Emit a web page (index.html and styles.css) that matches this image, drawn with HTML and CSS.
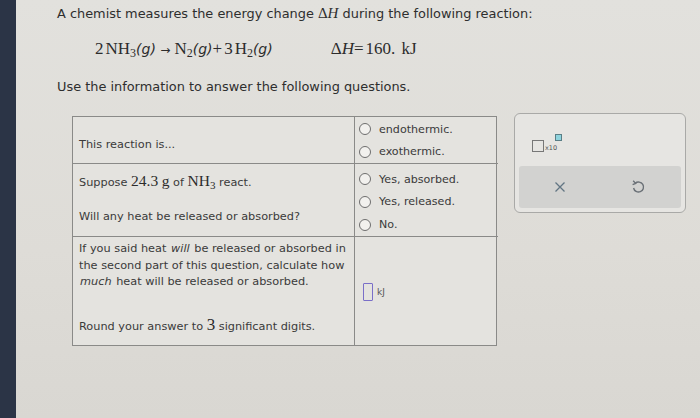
FILE: index.html
```html
<!DOCTYPE html>
<html>
<head>
<meta charset="utf-8">
<link rel="stylesheet" href="styles.css">
</head>
<body>
<div class="screen">
  <div class="strip"></div>
  <div class="page">
    <p class="intro">A chemist measures the energy change <span class="math">Δ<i>H</i></span> during the following reaction:</p>
    <div class="equation">
      <span class="eq">2<span class="thin"></span>NH<sub>3</sub><span class="ph">(g)</span> <span class="arrow">→</span> N<sub>2</sub><span class="ph">(g)</span>+<span class="thin"></span>3<span class="thin"></span>H<sub>2</sub><span class="ph">(g)</span></span>
      <span class="eq dh">Δ<i>H</i>=<span class="thin"></span>160.<span class="thin"></span> kJ</span>
    </div>
    <p class="use">Use the information to answer the following questions.</p>
    <div class="work">
      <div class="qtable">
        <div class="cell left r1"><span>This reaction is...</span></div>
        <div class="cell right r1">
          <label class="opt"><span class="radio"></span>endothermic.</label>
          <label class="opt"><span class="radio"></span>exothermic.</label>
        </div>
        <div class="cell left r2">
          <span>Suppose <span class="num">24.3</span> <span class="num">g</span> of <span class="num">NH<sub>3</sub></span> react.</span>
          <span>Will any heat be released or absorbed?</span>
        </div>
        <div class="cell right r2">
          <label class="opt"><span class="radio"></span>Yes, absorbed.</label>
          <label class="opt"><span class="radio"></span>Yes, released.</label>
          <label class="opt"><span class="radio"></span>No.</label>
        </div>
        <div class="cell left r3">
          <span>If you said heat <em>will</em> be released or absorbed in the second part of this question, calculate how <em>much</em> heat will be released or absorbed.</span>
          <span>Round your answer to <span class="num big">3</span> significant digits.</span>
        </div>
        <div class="cell right r3">
          <div class="answer"><span class="inbox"></span><span class="unit">kJ</span></div>
        </div>
      </div>
      <div class="panel">
        <div class="sci">
          <span class="sq"></span><span class="x10">x10</span><span class="sup"></span>
        </div>
        <div class="tools">
          <svg width="14" height="14" viewBox="0 0 14 14"><path d="M2.5 2.5 L11.5 11.5 M11.5 2.5 L2.5 11.5" stroke="#627583" stroke-width="1.3" fill="none"/></svg>
          <svg width="16" height="16" viewBox="0 0 16 16"><path d="M5.2 4.3 A5 5 0 1 1 3.6 9" stroke="#6a7076" stroke-width="1.4" fill="none"/><path d="M3.2 1.8 L5.6 4.4 L2.6 5.6" stroke="#6a7076" stroke-width="1.4" fill="none"/></svg>
        </div>
      </div>
    </div>
  </div>
</div>
</body>
</html>
```
FILE: styles.css
```css
html, body {
  margin: 0;
  padding: 0;
}
body {
  width: 700px;
  height: 418px;
  overflow: hidden;
  background: #dcdad5;
  font-family: "DejaVu Sans", Verdana, sans-serif;
  color: #333;
}
.screen {
  display: flex;
  height: 418px;
}
.strip {
  width: 16px;
  flex: none;
  background: #2b3446;
}
.page {
  flex: 1;
  background: linear-gradient(180deg, #e2e1dd 0%, #dedcd7 60%, #d9d7d2 100%);
  padding: 5px 0 0 41px;
}
.intro {
  margin: 0;
  font-size: 12.9px;
  line-height: 16px;
  color: #2e2e2e;
}
.math {
  font-family: "Liberation Serif", "Times New Roman", serif;
  font-size: 15px;
}
.equation {
  display: flex;
  gap: 58px;
  margin: 16px 0 0 38px;
  height: 22px;
  align-items: center;
}
.eq {
  font-family: "Liberation Serif", "Times New Roman", serif;
  font-size: 17px;
  color: #2c2c2c;
  white-space: nowrap;
}
.eq sub {
  font-size: 12px;
  vertical-align: -3px;
  line-height: 0;
}
.thin {
  display: inline-block;
  width: 2px;
}
.ph {
  font-family: "DejaVu Sans", Verdana, sans-serif;
  font-style: italic;
  font-size: 14px;
}
.arrow {
  font-family: "DejaVu Sans", sans-serif;
  font-size: 12px;
}
.use {
  margin: 19px 0 0 0;
  font-size: 12.9px;
  line-height: 16px;
  color: #2e2e2e;
}
.work {
  display: flex;
  align-items: flex-start;
  margin-top: 21px;
}
.qtable {
  margin-left: 15px;
  width: 425px;
  display: grid;
  grid-template-columns: 282px 143px;
  grid-template-rows: 47px 73px 108px;
  border: 1.5px solid #8a8a88;
  box-sizing: border-box;
  background: #e4e3df;
  font-size: 11.3px;
  color: #3a3a3a;
}
.cell {
  border-bottom: 1.5px solid #8a8a88;
  box-sizing: border-box;
}
.r3 { border-bottom: none; }
.left {
  border-right: 1.5px solid #8a8a88;
  padding: 0 6px;
  display: flex;
  flex-direction: column;
}
.left em { font-style: italic; padding: 0 1px; }
.left.r1 { justify-content: center; padding-top: 9px; }
.left.r2 { justify-content: space-between; padding: 8px 6px 13px; }
.left.r3 { justify-content: space-between; padding: 4px 6px 10px; line-height: 16.5px; }
.num {
  font-family: "Liberation Serif", "Times New Roman", serif;
  font-size: 15.5px;
  color: #2c2c2c;
}
.num sub { font-size: 11px; vertical-align: -3px; line-height: 0; }
.num.big { font-size: 17px; }
.right {
  display: flex;
  flex-direction: column;
  justify-content: space-around;
  padding: 1px 4px 0;
}
.right.r2 { padding: 4px 4px 0; }
.opt {
  display: flex;
  align-items: center;
  gap: 8px;
  font-size: 11.1px;
}
.radio {
  width: 10px;
  height: 10px;
  border: 1.2px solid #6e6e6e;
  border-radius: 50%;
  background: #f2f1ee;
}
.right.r3 {
  justify-content: center;
  padding-left: 8px;
}
.answer {
  display: flex;
  align-items: center;
  gap: 4px;
  margin-top: 0;
}
.inbox {
  width: 8px;
  height: 16px;
  border: 1.5px solid #7a6fc8;
  border-radius: 1px;
}
.unit { font-size: 9px; color: #555; }
.panel {
  margin-left: 17px;
  margin-top: -3px;
  width: 172px;
  height: 100px;
  border: 1.5px solid #a9a9a7;
  border-radius: 6px;
  box-sizing: border-box;
  background: #e6e5e2;
  padding: 4px;
  display: flex;
  flex-direction: column;
  justify-content: space-between;
}
.sci {
  position: relative;
  margin: 20px 0 0 13px;
  height: 14px;
  display: flex;
  align-items: flex-end;
}
.sq {
  width: 10px;
  height: 10px;
  border: 1.3px solid #777;
}
.x10 {
  font-size: 6.5px;
  color: #555;
  margin-left: 1px;
  line-height: 8px;
}
.sup {
  position: absolute;
  left: 23px;
  top: -4px;
  width: 5px;
  height: 5px;
  border: 1.3px solid #5a7e86;
  background: #8ed3dd;
}
.tools {
  height: 42px;
  background: #d2d2d0;
  border-radius: 3px;
  display: flex;
  align-items: center;
  gap: 63px;
  padding: 0 0 0 34px;
}
```
